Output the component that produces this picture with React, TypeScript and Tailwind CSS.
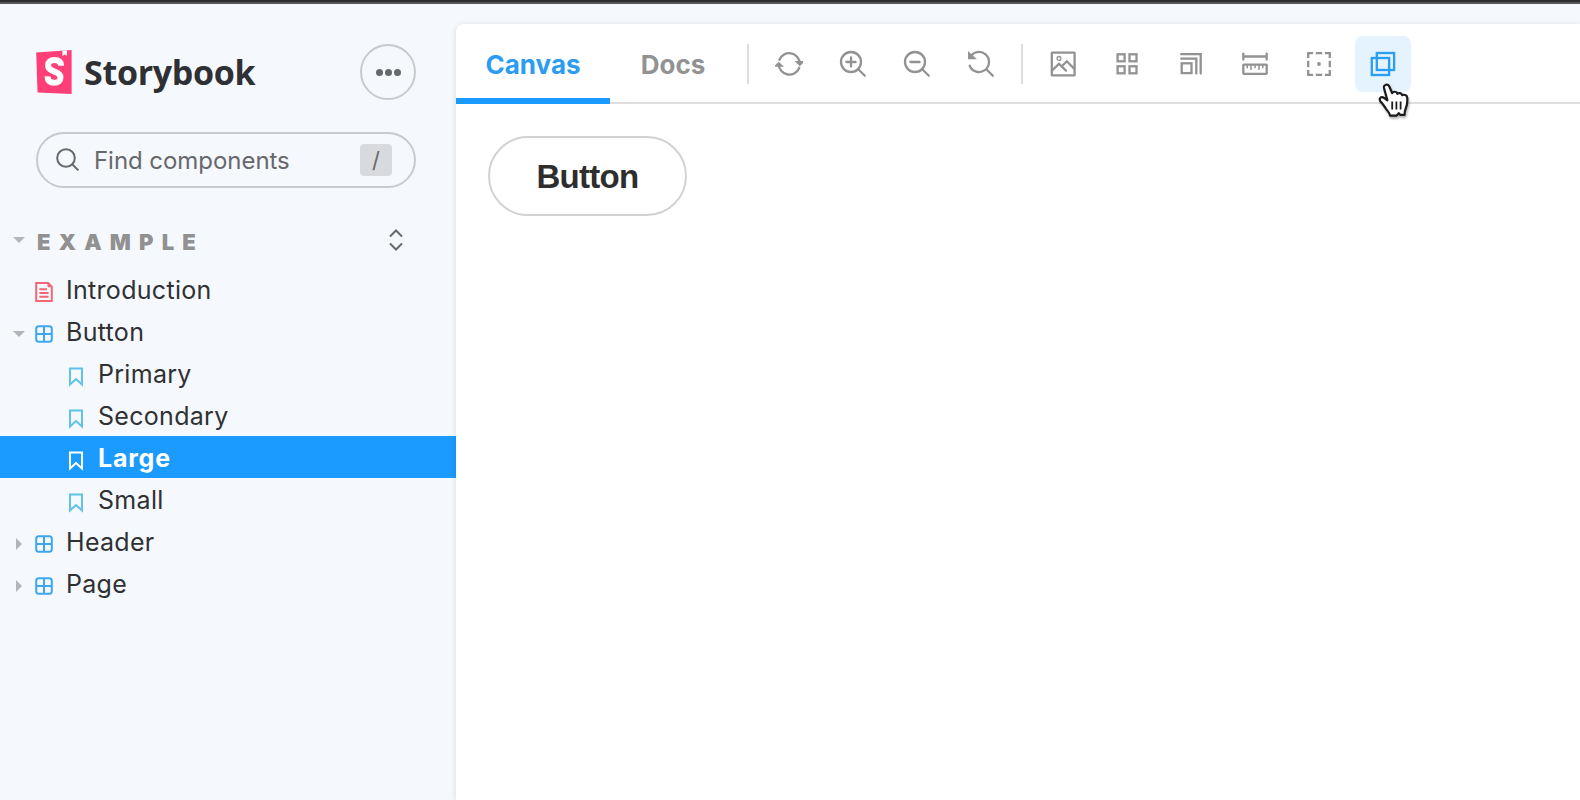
import type { ReactNode } from "react"

type Kind = "document" | "component" | "story"

const tree: { label: string; kind: Kind; open?: boolean; selected?: boolean }[] = [
  { label: "Introduction", kind: "document" },
  { label: "Button", kind: "component", open: true },
  { label: "Primary", kind: "story" },
  { label: "Secondary", kind: "story" },
  { label: "Large", kind: "story", selected: true },
  { label: "Small", kind: "story" },
  { label: "Header", kind: "component", open: false },
  { label: "Page", kind: "component", open: false },
]

const zoomTools: { title: string; icon: ReactNode }[] = [
  {
    title: "Remount component",
    icon: (
      <>
        <path d="M4.4 9.8A10.6 10.6 0 0 1 24.8 13.5M24.2 17.8A10.6 10.6 0 0 1 3.7 14.5" />
        <path d="M1.6 15.6 3.7 13.4l2.4 2.2zM22.4 12.2l2.4 2.4 2.3-2.4z" />
      </>
    ),
  },
  {
    title: "Zoom in",
    icon: (
      <>
        <circle cx="12" cy="12" r="10" />
        <path d="m19.3 19.3 6.5 6.5M12 7.4v9.2M7.4 12h9.2" />
      </>
    ),
  },
  {
    title: "Zoom out",
    icon: (
      <>
        <circle cx="12" cy="12" r="10" />
        <path d="m19.3 19.3 6.5 6.5M7.4 12h9.2" />
      </>
    ),
  },
  {
    title: "Reset zoom",
    icon: (
      <>
        <path d="M2.7 15.7A10 10 0 1 0 3.1 7.4M19.3 19.3l6.5 6.5" />
        <path d="M2.2 3.6v4.6h4.8z" />
      </>
    ),
  },
]

const viewTools: { title: string; icon: ReactNode; active?: boolean }[] = [
  {
    title: "Background",
    icon: (
      <>
        <rect x="2.8" y="2.6" width="22.8" height="22.8" rx=".5" />
        <circle cx="10" cy="8.4" r="1.9" strokeWidth="1.3" />
        <path d="m3 20.6 7-6.8 7 6.8M12.9 16.2l4.9-4.9 7.5 7.6" />
      </>
    ),
  },
  {
    title: "Grid",
    icon: (
      <>
        <rect x="4.6" y="4.3" width="7" height="7" />
        <rect x="16.5" y="4.3" width="7" height="7" />
        <rect x="4.6" y="16.3" width="7" height="7" />
        <rect x="16.5" y="16.3" width="7" height="7" />
      </>
    ),
  },
  {
    title: "Viewport",
    icon: (
      <>
        <rect x="4.7" y="13.3" width="9.8" height="9.8" />
        <path d="M4.2 8.7h15.1v14.8M4.2 4.2h19.5v19.3" />
      </>
    ),
  },
  {
    title: "Measure",
    icon: (
      <>
        <path d="M2.3 3.6v6M25.7 3.6v6M2.3 6.5h23.4" />
        <rect x="2.3" y="14.6" width="23.4" height="9.2" rx=".6" />
        <path d="M6.2 15v2.8M10 15v4.4M14 15v2.8M18 15v4.4M21.8 15v2.8" strokeWidth="1.5" />
      </>
    ),
  },
  {
    title: "Outline",
    icon: (
      <>
        <path d="M3.2 8.1V3.2h4.9M19.9 3.2h4.9v4.9M24.8 19.9v4.9h-4.9M8.1 24.8H3.2v-4.9" />
        <path d="M10.8 3.2h6.4M10.8 24.8h6.4M3.2 10.8v6.4M24.8 10.8v6.4" />
        <circle cx="14" cy="14" r="1.9" fill="currentColor" stroke="none" />
      </>
    ),
  },
  {
    title: "Overlap",
    active: true,
    icon: (
      <>
        <rect x="7.8" y="3" width="17.3" height="17" />
        <rect x="2.8" y="8" width="17.3" height="17" />
      </>
    ),
  },
]

function ToolButton({ title, icon, active }: { title: string; icon: ReactNode; active?: boolean }) {
  return (
    <button
      title={title}
      className={`size-14 flex items-center justify-center rounded-lg ${active ? "bg-[#e4f3fe] text-[#2a9df4]" : "text-[#929292]"}`}
    >
      <svg viewBox="0 0 28 28" className="size-7" fill="none" stroke="currentColor" strokeWidth="2.3" strokeLinecap={title === "Outline" ? "butt" : "round"}>
        {icon}
      </svg>
    </button>
  )
}

function Caret({ open }: { open: boolean }) {
  return (
    <svg viewBox="0 0 12 12" className="size-3" fill="#b3b5b8">
      {open ? <path d="M0 3h12L6 9z" /> : <path d="M3 0v12l6-6z" />}
    </svg>
  )
}

function NodeIcon({ kind, selected }: { kind: Kind; selected?: boolean }) {
  if (kind === "document") {
    return (
      <svg viewBox="0 0 18 20" className="w-[18px] h-5" fill="none" stroke="#f06876" strokeWidth="2">
        <path d="M1.2 1h12l3.6 3.6V19H1.2z" />
        <path d="M13 1v3.8h3.8z" fill="#f06876" strokeWidth="1" />
        <path d="M4.4 7.2h7.6M4.4 11h9.2M4.4 14.8h9.2" strokeWidth="2" />
      </svg>
    )
  }
  if (kind === "component") {
    return (
      <svg viewBox="0 0 18 18" className="size-[18px]" fill="none" stroke="#3fa6f2" strokeWidth="2">
        <rect x="1.2" y="1.2" width="15.6" height="15.6" rx="2.6" />
        <path d="M9 1v16M1 9h16" />
      </svg>
    )
  }
  return (
    <svg viewBox="0 0 14 20" className="w-3.5 h-5" fill="none" stroke={selected ? "#ffffff" : "#5fc2e8"} strokeWidth="2">
      <path d="M1 1.4h12v16l-6-5.4-6 5.4z" />
    </svg>
  )
}

function Sidebar() {
  return (
    <aside className="w-[456px] shrink-0 pt-10">
      <div className="flex items-center justify-between pl-9 pr-10">
        <div className="flex items-center gap-3">
          <svg viewBox="0 0 36 44" className="w-9 h-11">
            <path d="M.2 2.6 35.6 0v44L1.5 42.5z" fill="#ff4078" />
            <path d="M26.4.7 31 .3v5.5l-2.3-1.4-2.3 1.6z" fill="#fff" />
            <path
              d="M25.1 15.8C25 11.6 22.4 10 18.5 10c-3.9 0-6.4 1.9-6.4 5.2 0 7.6 12.4 5.2 12.4 12 0 3.6-2.3 5.6-6.3 5.6-4.2 0-6.7-1.9-6.5-6.4"
              fill="none"
              stroke="#fff"
              strokeWidth="6"
            />
          </svg>
          <span className="font-['Open_Sans',sans-serif] font-bold text-[34px] leading-none tracking-[-0.3px] text-[#2e3033]">Storybook</span>
        </div>
        <button className="size-14 rounded-full border-2 border-[#c9cacc] flex items-center justify-center gap-0.5">
          <span className="size-[7px] rounded-full bg-[#66686b]" />
          <span className="size-[7px] rounded-full bg-[#66686b]" />
          <span className="size-[7px] rounded-full bg-[#66686b]" />
        </button>
      </div>

      <div className="mt-8 ml-9 mr-10 h-14 rounded-full border-2 border-[#c9cacc] flex items-center pl-[18px] pr-[22px] text-[#66686b]">
        <svg viewBox="0 0 24 24" className="size-6 shrink-0" fill="none" stroke="currentColor" strokeWidth="2">
          <circle cx="10" cy="10" r="8.8" />
          <path d="m16.2 16.2 6.2 6.2" />
        </svg>
        <span className="ml-3.5 flex-1 pt-0.5 text-[24px] tracking-[-0.05px] whitespace-nowrap">Find components</span>
        <kbd className="size-8 rounded bg-[#d9dadd] flex items-center justify-center font-['Inter',sans-serif] text-[22px]">/</kbd>
      </div>

      <div className="mt-8 h-10 flex items-center pl-[13px] pr-[53px]">
        <Caret open />
        <span className="ml-3 flex-1 pt-1 text-[22px] font-black tracking-[8.2px] text-[#919191]">EXAMPLE</span>
        <svg viewBox="0 0 14 22" className="w-3.5 h-[22px]" fill="none" stroke="#66686b" strokeWidth="2">
          <path d="m1 7.500 6-6 6 6M1 14.500l6 6 6-6" />
        </svg>
      </div>

      <ul className="mt-2">
        {tree.map((node) => (
          <li
            key={node.label}
            className={`h-[42px] flex items-center text-[25px] ${node.selected ? "bg-[#1b9bff] text-white font-bold tracking-[0.8px]" : "text-[#2f3133] tracking-[0.3px]"}`}
          >
            <span className="w-[35px] pl-[13px] pt-[5px] shrink-0">{node.open !== undefined && <Caret open={node.open} />}</span>
            {node.kind === "story" && <span className="w-[33px] shrink-0" />}
            <span className={`shrink-0 ${node.kind === "story" ? "w-[30px] pl-px pt-2" : "w-[31px] pt-1.5"}`}>
              <NodeIcon kind={node.kind} selected={node.selected} />
            </span>
            <span className="pt-[3px]">{node.label}</span>
          </li>
        ))}
      </ul>
    </aside>
  )
}

function Toolbar() {
  return (
    <div className="h-20 flex border-b-2 border-[#dddddd]">
      <button className="-mb-0.5 w-[154px] border-b-[6px] border-[#1b9bff] pt-1.5 text-[26px] font-bold text-[#2b9cf2]">Canvas</button>
      <button className="w-[126px] pt-0.5 text-[26px] font-bold text-[#929292]">Docs</button>
      <div className="flex items-center gap-2 pt-0.5">
        <span className="ml-[11px] mr-1 h-10 w-0.5 bg-[#dddddd]" />
        {zoomTools.map((t) => (
          <ToolButton key={t.title} {...t} />
        ))}
        <span className="mx-1 h-10 w-0.5 bg-[#dddddd]" />
        {viewTools.map((t) => (
          <ToolButton key={t.title} {...t} />
        ))}
      </div>
    </div>
  )
}

// Hand cursor hovering over the active tool
function Pointer() {
  return (
    <svg viewBox="0 0 32 36" className="absolute left-[1377px] top-[83px] w-8 h-9 drop-shadow-[1px_2px_1px_rgba(0,0,0,0.3)]">
      <path
        d="M7 5C6.400 1.400 10.800.4 12.200 3.200l3 7c.8-2 4.600-2 5.200.6 1.200-1.400 4.400-.8 4.800 1.400 1.800-1 4.800-.2 5 2.400.4 4.400 0 7.400-1.400 10.600-.8 1.800-1.200 3.200-1.200 6.600h-4.400l-1.400-1.600-2.200 2.400h-6.600c-.4-3-2.200-4.400-4-6.800-1.600-2.400-2.600-4.200-5-6.800C1.600 16.400 3 13.400 6 14.400c1.600.6 3 1.800 4.400 3z"
        fill="#fff"
        stroke="#1c1c1c"
        strokeWidth="2.2"
        strokeLinejoin="round"
      />
      <path d="M15.200 18.500v8M19.400 18.500v8M23.600 18.500v8" stroke="#1c1c1c" strokeWidth="1.8" />
    </svg>
  )
}

export default function App() {
  return (
    <div className="relative h-[800px] w-[1580px] overflow-hidden flex flex-col bg-[#f5f8fd] font-['Inter',sans-serif]">
      <div className="h-1 shrink-0 bg-[#2e2e2e] border-b-2 border-[#56575a]" />
      <div className="flex-1 flex">
        <Sidebar />
        <main className="mt-5 flex-1 bg-white rounded-tl-lg shadow-[0_1px_6px_rgba(0,0,0,0.12)]">
          <Toolbar />
          <button className="ml-8 mt-8 w-[199px] h-20 pt-0.5 rounded-full border-2 border-[#d2d2d4] font-['Liberation_Sans',sans-serif] font-bold text-[33px] tracking-[-0.7px] text-[#2e2e2e]">
            Button
          </button>
        </main>
      </div>
      <Pointer />
    </div>
  )
}
